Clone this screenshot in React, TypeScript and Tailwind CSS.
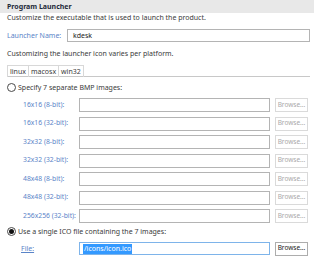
import React from "react";

const font = { fontFamily: '"Noto Sans", "Open Sans", sans-serif' };

function Radio({ checked }: { checked?: boolean }) {
  return (
    <div className="w-[9px] h-[9px] rounded-full border border-[#4a4a4a] bg-white flex items-center justify-center shrink-0">
      {checked && <div className="w-[5px] h-[5px] rounded-full bg-[#111]" />}
    </div>
  );
}

function BmpRow({ label }: { label: string }) {
  return (
    <div className="flex items-center h-[14px]">
      <div className="w-[56px] pl-[23px] box-content text-[#5a84c8] whitespace-nowrap text-[6.8px]">{label}</div>
      <div className="w-[191px] h-[14px] border border-[#b4b4b4] bg-white" />
      <div className="ml-[5px] w-[33px] h-[14px] border border-[#dadada] bg-white text-[#a9a9a9] flex items-center justify-center text-[6.5px]">
        Browse...
      </div>
    </div>
  );
}

export default function App() {
  const rows = [
    "16x16 (8-bit):",
    "16x16 (32-bit):",
    "32x32 (8-bit):",
    "32x32 (32-bit):",
    "48x48 (8-bit):",
    "48x48 (32-bit):",
    "256x256 (32-bit):",
  ];
  return (
    <div className="w-[320px] h-[262px] bg-white overflow-hidden text-[7px] leading-none text-[#3a3a3a]" style={font}>
      <div className="w-[314px] h-[13px] bg-[#e8e8e8] pl-[7px] flex items-center font-bold text-[#1e2a3a]">
        Program Launcher
      </div>
      <div className="h-[9px] pl-[7px] flex items-center">
        Customize the executable that is used to launch the product.
      </div>
      <div className="mt-[7px] flex items-center h-[13px] pl-[7px]">
        <div className="w-[60px] text-[#5a84c8]">Launcher Name:</div>
        <div className="w-[243px] h-[13px] border border-[#b4b4b4] bg-white flex items-center pl-[5px] text-[#222]">
          kdesk
        </div>
      </div>
      <div className="mt-[6px] h-[10px] pl-[7px] flex items-center">
        Customizing the launcher icon varies per platform.
      </div>
      <div className="mt-[7px] ml-[7px] w-[303px] h-[12px] border-b border-[#c8c8c8] flex">
        <div className="h-[12px] px-[2px] border border-b-0 border-[#d8d8d8] flex items-center">linux</div>
        <div className="h-[12px] px-[2px] border border-l-0 border-b-0 border-[#d8d8d8] flex items-center">macosx</div>
        <div className="h-[12px] px-[2px] border border-l-0 border-b-0 border-[#d8d8d8] flex items-center">win32</div>
      </div>
      <div className="mt-[5px] h-[11px] pl-[7px] flex items-center gap-[2px]">
        <Radio />
        <span>Specify 7 separate BMP images:</span>
      </div>
      <div className="mt-[5px] flex flex-col gap-[4.5px]">
        {rows.map((r) => (
          <BmpRow key={r} label={r} />
        ))}
      </div>
      <div className="mt-[3px] h-[10px] pl-[7px] flex items-center gap-[2px]">
        <Radio checked />
        <span>Use a single ICO file containing the 7 images:</span>
      </div>
      <div className="mt-[6px] flex items-center h-[13px]">
        <div className="w-[58px] pl-[21px] box-content text-[#5a84c8] underline">File:</div>
        <div className="w-[191px] h-[13px] border border-[#7eb4ea] bg-white flex items-center pl-[3px]">
          <span className="bg-[#3399ff] text-white h-[10px] flex items-center px-[1px]">/icons/icon.ico</span>
        </div>
        <div className="ml-[5px] w-[33px] h-[14px] border border-[#adadad] bg-white text-[#222] flex items-center justify-center text-[6.5px]">
          Browse...
        </div>
      </div>
    </div>
  );
}
